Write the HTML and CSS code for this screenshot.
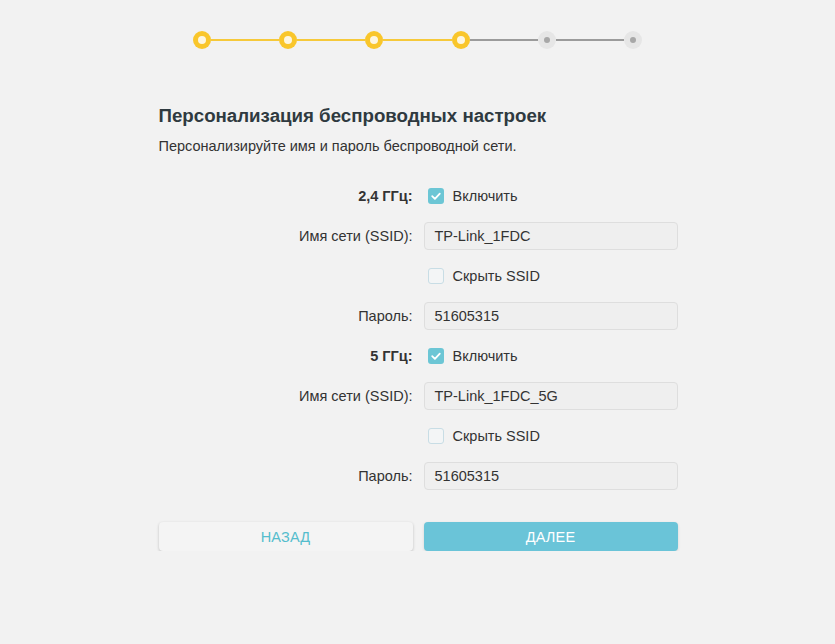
FILE: index.html
```html
<!DOCTYPE html>
<html lang="ru">
<head>
<meta charset="utf-8">
<title>Персонализация беспроводных настроек</title>
<link rel="stylesheet" href="styles.css">
</head>
<body>
<div class="page">
  <div class="stepper">
    <span class="dot done"></span><span class="line done"></span>
    <span class="dot done"></span><span class="line done"></span>
    <span class="dot done"></span><span class="line done"></span>
    <span class="dot done"></span><span class="line"></span>
    <span class="dot"></span><span class="line"></span>
    <span class="dot"></span>
  </div>

  <h1 class="title">Персонализация беспроводных настроек</h1>
  <p class="subtitle">Персонализируйте имя и пароль беспроводной сети.</p>

  <div class="form">
    <div class="label bold">2,4 ГГц:</div>
    <label class="check"><span class="box checked"><svg viewBox="0 0 16 16" width="16" height="16"><path d="M4.2 8.2 L6.9 10.8 L11.8 5.6" fill="none" stroke="#fff" stroke-width="1.8" stroke-linecap="round" stroke-linejoin="round"/></svg></span>Включить</label>

    <div class="label">Имя сети (SSID):</div>
    <div class="input">TP-Link_1FDC</div>

    <div class="label"></div>
    <label class="check"><span class="box"></span>Скрыть SSID</label>

    <div class="label">Пароль:</div>
    <div class="input">51605315</div>

    <div class="label bold">5 ГГц:</div>
    <label class="check"><span class="box checked"><svg viewBox="0 0 16 16" width="16" height="16"><path d="M4.2 8.2 L6.9 10.8 L11.8 5.6" fill="none" stroke="#fff" stroke-width="1.8" stroke-linecap="round" stroke-linejoin="round"/></svg></span>Включить</label>

    <div class="label">Имя сети (SSID):</div>
    <div class="input">TP-Link_1FDC_5G</div>

    <div class="label"></div>
    <label class="check"><span class="box"></span>Скрыть SSID</label>

    <div class="label">Пароль:</div>
    <div class="input">51605315</div>
  </div>

  <div class="buttons">
    <button class="btn back">НАЗАД</button>
    <button class="btn next">ДАЛЕЕ</button>
  </div>
</div>
</body>
</html>
```

FILE: styles.css
```css
html, body {
  margin: 0;
  padding: 0;
  background: #f2f2f2;
}
body {
  font-family: "Liberation Sans", Arial, sans-serif;
  color: #333;
}
.page {
  width: 518px;
  margin: 0 auto;
  padding-top: 31px;
}
.stepper {
  width: 449px;
  margin: 0 auto;
  display: flex;
  align-items: center;
}
.dot {
  width: 18px;
  height: 18px;
  border-radius: 50%;
  background: #e6e6e6;
  display: flex;
  align-items: center;
  justify-content: center;
  flex: none;
}
.dot::after {
  content: "";
  width: 6px;
  height: 6px;
  border-radius: 50%;
  background: #a8a8a8;
}
.dot.done {
  background: #f9c62b;
}
.dot.done::after {
  width: 8px;
  height: 8px;
  background: #fdf6e0;
}
.line {
  flex: 1;
  height: 2px;
  background: #9b9b9b;
}
.line.done {
  background: #f6c93a;
}
.title {
  margin: 55px 0 0;
  font-size: 18.7px;
  font-weight: bold;
  color: #2f3a40;
  line-height: 24px;
}
.subtitle {
  margin: 9px 0 0;
  font-size: 14.5px;
  line-height: 18px;
  color: #333;
}
.form {
  margin-top: 21px;
  display: grid;
  grid-template-columns: 254px 254px;
  column-gap: 11px;
  grid-auto-rows: 40px;
  align-items: center;
}
.label {
  text-align: right;
  font-size: 14.5px;
  color: #333;
}
.label.bold {
  font-weight: bold;
}
.check {
  display: flex;
  align-items: center;
  font-size: 14.5px;
  color: #333;
  padding-left: 4px;
}
.box {
  width: 16px;
  height: 16px;
  box-sizing: border-box;
  border-radius: 3px;
  border: 1.5px solid #c8dde5;
  background: #f3f5f6;
  margin-right: 9px;
  display: flex;
}
.box.checked {
  border: none;
  background: #6cc6d5;
}
.input {
  height: 28px;
  box-sizing: border-box;
  border: 1px solid #dedede;
  border-radius: 4px;
  background: #efefef;
  font-size: 14.5px;
  color: #333;
  padding: 0 10px;
  display: flex;
  align-items: center;
}
.buttons {
  margin-top: 26px;
  display: grid;
  grid-template-columns: 254px 254px;
  column-gap: 11px;
}
.btn {
  height: 29px;
  border: none;
  border-radius: 4px;
  font-family: "Liberation Sans", Arial, sans-serif;
  font-size: 14.5px;
  letter-spacing: 0.2px;
  cursor: pointer;
}
.btn.back {
  background: #f4f4f4;
  color: #55bdcd;
  box-shadow: 0 1px 3px rgba(0,0,0,0.22);
}
.btn.next {
  background: #6ac4d8;
  color: #fff;
  box-shadow: 0 1px 3px rgba(0,0,0,0.12);
}
```
